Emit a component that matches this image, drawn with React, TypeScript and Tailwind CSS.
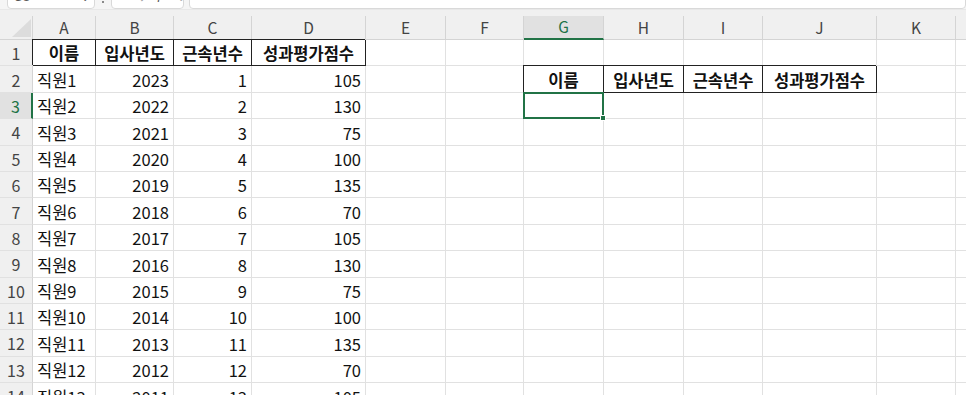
import clsx from "clsx";

type Cell = { t?: string | number; a?: "l" | "r" | "c"; b?: boolean; box?: boolean; sel?: boolean };

const GRID =
  "grid grid-cols-[33px_63px_78px_78px_114px_80px_78px_80px_80px_79px_114px_79px_80px]";
const letters = ["A", "B", "C", "D", "E", "F", "G", "H", "I", "J", "K", "L"];
const heads = ["이름", "입사년도", "근속년수", "성과평가점수"];
const scores = [105, 130, 75, 100, 135, 70, 105, 130, 75, 100, 135, 70, 105];

function buildRows(): Cell[][] {
  const rows: Cell[][] = [];
  const first: Cell[] = letters.map(() => ({}));
  heads.forEach((h, i) => (first[i] = { t: h, a: "c", b: true, box: true }));
  rows.push(first);
  for (let n = 1; n <= 13; n++) {
    const r: Cell[] = letters.map(() => ({}));
    r[0] = { t: `직원${n}`, a: "l" };
    r[1] = { t: 2024 - n, a: "r" };
    r[2] = { t: n, a: "r" };
    r[3] = { t: scores[n - 1], a: "r" };
    if (n === 1) heads.forEach((h, i) => (r[6 + i] = { t: h, a: "c", b: true, box: true }));
    if (n === 2) r[6] = { sel: true };
    rows.push(r);
  }
  return rows;
}

function FormulaBar() {
  return (
    <div className="flex h-[10px] items-end overflow-hidden bg-[#f5f5f5] border-b border-[#e8e8e8] text-[#555]">
      <div className="ml-[7px] flex h-[30px] w-[88px] shrink-0 items-end justify-between rounded-[4px] border border-[#d9d9d9] bg-white px-[5px] pb-[6px] text-[14px] leading-none">
        <span>G3</span>
        <span className="text-[10px]">⌄</span>
      </div>
      <div className="mx-[7px] mb-[6px] h-[2px] w-[2px] shrink-0 rounded-full bg-[#666]" />
      <div className="flex h-[30px] w-[73px] shrink-0 items-end gap-[9px] rounded-[4px] border border-[#d9d9d9] bg-white px-[6px] pb-[6px] text-[14px] leading-none text-[#aaa]">
        <span>✕</span>
        <span>✓</span>
        <span className="italic text-[#555] font-['Liberation_Serif',serif]">fx</span>
        <span className="text-[10px]">⌄</span>
      </div>
      <div className="ml-[5px] h-[30px] flex-1 rounded-[4px] border border-[#d9d9d9] bg-white" />
    </div>
  );
}

function ColumnHeaders() {
  return (
    <div className={clsx(GRID, "h-[30px] bg-[#f0f0f0] pt-[6px]")}>
      <div className="relative border-r border-b border-[#d4d4d4]">
        <svg className="absolute left-0 top-0" width="33" height="24" viewBox="0 0 33 24">
          <polygon points="31,3 31,21 12,21" fill="#dcdcdc" />
        </svg>
      </div>
      {letters.map((l) => (
        <div
          key={l}
          className={clsx(
            "flex items-center justify-center border-r border-b border-[#d4d4d4] text-[15.5px] leading-none",
            l === "G" ? "bg-[#e1e1e1] text-[#217346] border-b-2 border-b-[#217346]" : "text-[#444]"
          )}
        >
          {l}
        </div>
      ))}
    </div>
  );
}

export default function App() {
  const rows = buildRows();
  return (
    <div className="h-[395px] w-[966px] overflow-hidden bg-white font-['Noto_Sans_CJK_KR',sans-serif]">
      <FormulaBar />
      <div className="overflow-hidden">
        <div className="w-[1036px]">
          <ColumnHeaders />
          <div className={clsx(GRID, "auto-rows-[26.4px]")}>
            {rows.map((r, ri) => [
              <div
                key={`h${ri}`}
                className={clsx(
                  "flex items-center justify-center border-b border-[#e1e1e1] pt-[1px] text-[16px] leading-none",
                  ri === 2
                    ? "bg-[#e1e1e1] text-[#217346] border-r-2 border-r-[#217346]"
                    : "bg-[#f0f0f0] text-[#444] border-r border-r-[#d4d4d4]"
                )}
              >
                {ri + 1}
              </div>,
              ...r.map((c, ci) => (
                <div
                  key={`${ri}-${ci}`}
                  className={clsx(
                    "relative flex items-center border-r border-b border-[#e1e1e1] px-[4px] pt-[2px] text-[16.5px] leading-none text-[#111] whitespace-nowrap",
                    c.a === "r" && "justify-end",
                    c.a === "c" && "justify-center",
                    c.b && "font-bold",
                    c.box && "border-r-[#222] border-b-[#222] shadow-[-1px_-1px_0_#222]"
                  )}
                >
                  {c.t}
                  {c.sel && (
                    <div className="absolute inset-[-1px] z-10 border-2 border-[#217346]">
                      <div className="absolute -bottom-[4px] -right-[4px] h-[6px] w-[6px] border border-white bg-[#217346]" />
                    </div>
                  )}
                </div>
              )),
            ])}
          </div>
        </div>
      </div>
    </div>
  );
}
